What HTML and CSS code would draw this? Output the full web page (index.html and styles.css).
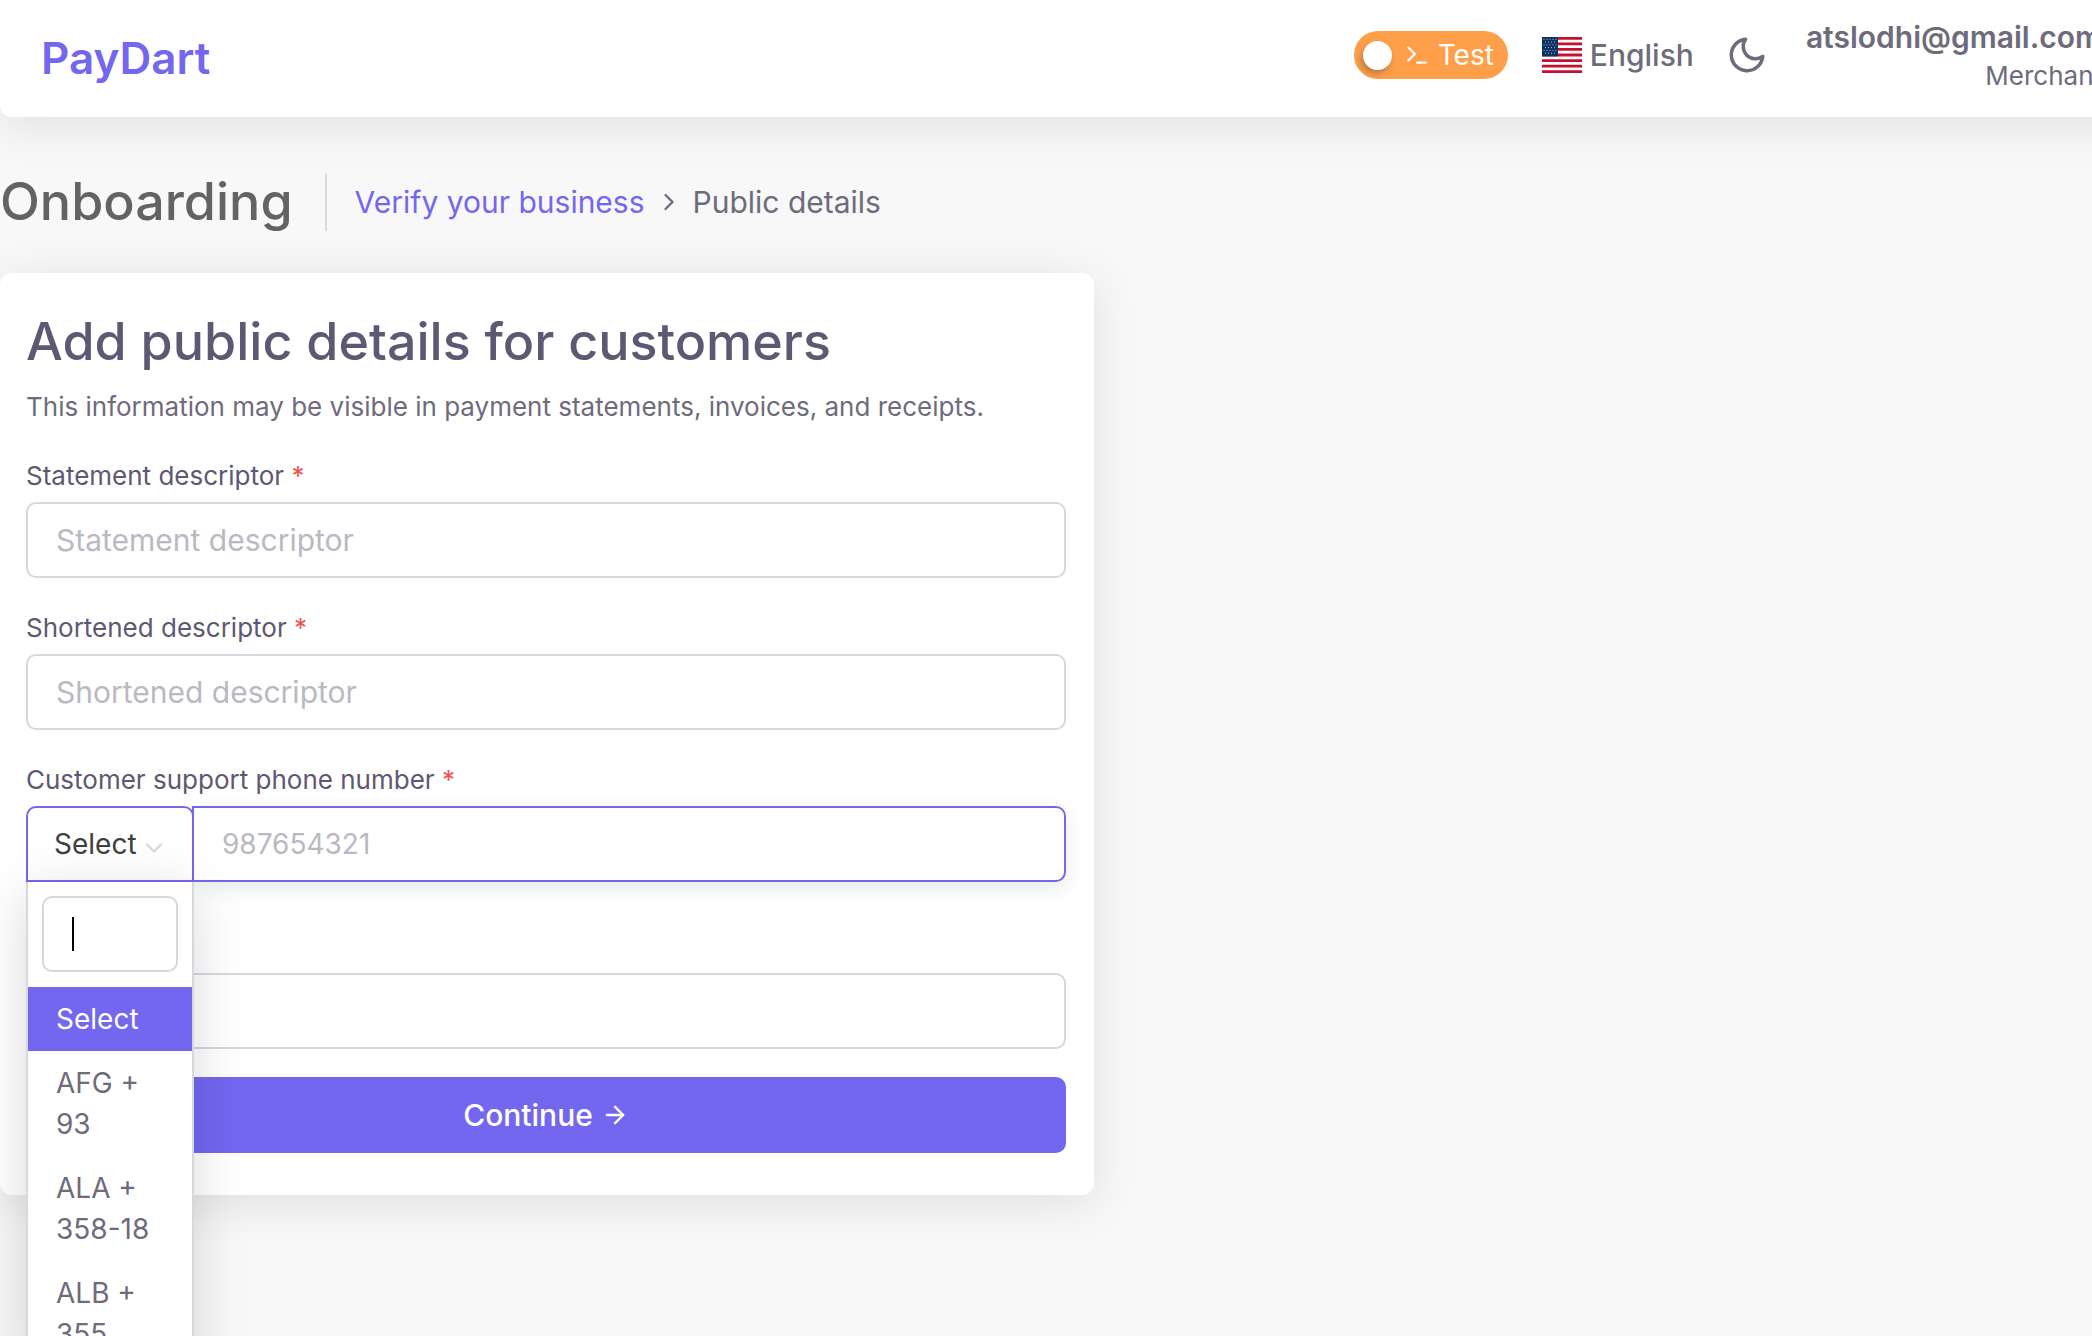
FILE: index.html
```html
<!DOCTYPE html>
<html lang="en">
<head>
    <meta charset="UTF-8">
    <meta name="viewport" content="width=device-width, initial-scale=1.0">
    <title>Onboarding - PayDart</title>
    <link rel="stylesheet" href="styles.css">
</head>
<body>
    <header class="navbar">
        <a href="#" class="brand">PayDart</a>

        <div class="navbar-right">
            <label class="mode-switch">
                <input type="checkbox" class="mode-knob">
                <svg class="mode-icon" viewBox="0 0 24 24" fill="none" stroke="currentColor" stroke-width="2" stroke-linecap="round" stroke-linejoin="round">
                    <polyline points="4 17 10 11 4 5"></polyline>
                    <line x1="12" y1="19" x2="20" y2="19"></line>
                </svg>
                <span>Test</span>
            </label>

            <button type="button" class="language">
                <svg class="flag" viewBox="0 0 40 39" preserveAspectRatio="none">
                    <rect width="40" height="39" fill="#fff"/>
                    <path d="M0 1.5H40M0 7.5H40M0 13.5H40M0 19.5H40M0 25.5H40M0 31.5H40M0 37.5H40" stroke="#c8102e" stroke-width="3"/>
                    <rect width="16" height="21" fill="#0a3161"/>
                    <path d="M1.5 2.5H16M3 5.5H15M1.5 8.5H16M3 11.5H15M1.5 14.5H16M3 17.5H15" stroke="#b9c6dc" stroke-width="1" stroke-dasharray="1 2"/>
                </svg>
                <span>English</span>
            </button>

            <button type="button" class="theme-toggle" aria-label="Dark mode">
                <svg viewBox="0 0 24 24" fill="none" stroke="currentColor" stroke-width="2" stroke-linecap="round" stroke-linejoin="round">
                    <path d="M21 12.79A9 9 0 1 1 11.21 3 7 7 0 0 0 21 12.79z"></path>
                </svg>
            </button>

            <a href="#" class="user">
                <span class="user-name">atslodhi@gmail.com</span>
                <span class="user-role">Merchant</span>
            </a>
        </div>
    </header>

    <main>
        <div class="content-header">
            <h1 class="content-title">Onboarding</h1>
            <nav class="breadcrumb" aria-label="Breadcrumb">
                <a href="#">Verify your business</a>
                <svg viewBox="0 0 24 24" fill="none" stroke="currentColor" stroke-width="2" stroke-linecap="round" stroke-linejoin="round">
                    <polyline points="9 18 15 12 9 6"></polyline>
                </svg>
                <span>Public details</span>
            </nav>
        </div>

        <form class="card">
            <h2 class="card-title">Add public details for customers</h2>
            <p class="card-text">This information may be visible in payment statements, invoices, and receipts.</p>

            <div class="form-group">
                <label for="statement">Statement descriptor <span class="required">*</span></label>
                <input type="text" id="statement" class="form-control" placeholder="Statement descriptor">
            </div>

            <div class="form-group">
                <label for="shortened">Shortened descriptor <span class="required">*</span></label>
                <input type="text" id="shortened" class="form-control" placeholder="Shortened descriptor">
            </div>

            <div class="form-group">
                <label for="phone">Customer support phone number <span class="required">*</span></label>
                <div class="phone-group">
                    <div class="country">
                        <select class="country-select" aria-label="Country code">
                            <option>Select</option>
                        </select>
                        <svg class="country-arrow" viewBox="0 0 24 24" fill="none" stroke="currentColor" stroke-width="2" stroke-linecap="round" stroke-linejoin="round">
                            <polyline points="6 9 12 15 18 9"></polyline>
                        </svg>

                        <!-- open country list -->
                        <div class="country-menu">
                            <div class="country-search">
                                <input type="text" class="form-control" aria-label="Search country">
                            </div>
                            <ul class="country-list">
                                <li class="active">Select</li>
                                <li>AFG + 93</li>
                                <li>ALA + 358-18</li>
                                <li>ALB + 355</li>
                            </ul>
                        </div>
                    </div>
                    <input type="tel" id="phone" class="form-control phone-input" placeholder="987654321">
                </div>
            </div>

            <div class="form-group form-group-last">
                <input type="text" class="form-control" aria-label="Website">
            </div>

            <button type="button" class="btn-primary">
                <span>Continue</span>
                <svg viewBox="0 0 24 24" fill="none" stroke="currentColor" stroke-width="2" stroke-linecap="round" stroke-linejoin="round">
                    <line x1="5" y1="12" x2="19" y2="12"></line>
                    <polyline points="12 5 19 12 12 19"></polyline>
                </svg>
            </button>
        </form>
    </main>
</body>
</html>
```
FILE: styles.css
```css
* {
    margin: 0;
    padding: 0;
    box-sizing: border-box;
}

body {
    font-family: Inter, 'Open Sans', sans-serif;
    font-size: 30px;
    line-height: 41px;
    color: #6e6b7b;
    background: #f8f8f8;
    height: 100vh;
    overflow: hidden;
}

a {
    color: #7367f0;
    text-decoration: none;
}

button,
input,
select {
    font: inherit;
    color: inherit;
}

button {
    background: none;
    border: none;
    cursor: pointer;
}

/* navbar */
.navbar {
    display: flex;
    justify-content: space-between;
    align-items: center;
    height: 117px;
    margin-right: -60px;
    padding: 0 50px 0 41px;
    background: #fff;
    border-radius: 0 0 12px 12px;
    box-shadow: 0 8px 48px rgba(0, 0, 0, 0.1);
}

.brand {
    font-size: 44px;
    font-weight: 600;
}

.navbar-right {
    display: flex;
    align-items: center;
    padding-bottom: 7px;
}

.mode-switch {
    display: flex;
    align-items: center;
    height: 48px;
    padding: 0 14px 0 9px;
    border-radius: 24px;
    background: #ff9f4a;
    color: #fff;
    font-size: 28px;
}

.mode-knob {
    appearance: none;
    width: 29px;
    height: 29px;
    border-radius: 50%;
    background: #fff;
    box-shadow: -2px 4px 6px rgba(34, 41, 47, 0.3);
}

.mode-icon {
    width: 26px;
    height: 26px;
    margin: 0 8px 0 12px;
}

.language {
    display: flex;
    align-items: center;
    gap: 8px;
    margin-left: 34px;
    font-weight: 500;
}

.flag {
    width: 40px;
    height: 36px;
}

.theme-toggle {
    display: flex;
    margin: 0 38px 0 32px;
}

.theme-toggle svg {
    width: 42px;
    height: 42px;
}

.user {
    display: flex;
    flex-direction: column;
    align-items: flex-end;
    color: #6e6b7b;
}

.user-name {
    font-weight: 600;
}

.user-role {
    font-size: 26px;
    line-height: 35px;
}

/* title row */
.content-header {
    display: flex;
    align-items: center;
    margin: 56px 0 42px;
}

.content-title {
    padding-right: 32px;
    border-right: 2px solid #d6dce1;
    font-size: 52px;
    font-weight: 500;
    line-height: 58px;
    color: #636363;
}

.breadcrumb {
    display: flex;
    align-items: center;
    gap: 10px;
    padding-left: 28px;
}

.breadcrumb svg {
    width: 28px;
    height: 28px;
}

/* card */
.card {
    max-width: 1094px;
    padding: 40px 28px 42px 26px;
    background: #fff;
    border-radius: 12px;
    box-shadow: 0 8px 48px rgba(0, 0, 0, 0.1);
}

.card-title {
    margin-bottom: 18px;
    font-size: 52px;
    font-weight: 500;
    line-height: 58px;
    color: #5e5873;
}

.card-text {
    margin-bottom: 34px;
    font-size: 26px;
    line-height: 35px;
}

.form-group {
    margin-bottom: 32px;
}

.form-group label {
    display: block;
    margin-bottom: 9px;
    font-size: 26px;
    line-height: 35px;
    color: #5e5873;
}

.required {
    color: #ea5455;
}

.form-control {
    display: block;
    width: 100%;
    height: 76px;
    padding: 0 28px;
    border: 2px solid #d8d6de;
    border-radius: 10px;
    background: #fff;
    outline: none;
}

.form-control::placeholder {
    color: #b9b9c3;
    opacity: 1;
}

.form-group-last {
    margin-top: 91px;
    margin-bottom: 28px;
}

/* phone number with country list */
.phone-group {
    display: flex;
}

.country {
    position: relative;
    z-index: 1;
    flex: 0 0 168px;
}

.country-select {
    display: block;
    appearance: none;
    width: 100%;
    height: 76px;
    padding-left: 26px;
    border: 2px solid #7367f0;
    border-radius: 10px 10px 0 0;
    background: #fff;
    color: #404040;
    font-size: 28px;
}

.country-arrow {
    position: absolute;
    top: 28px;
    right: 26px;
    width: 28px;
    height: 28px;
    color: #d8d6de;
}

.country-menu {
    position: absolute;
    top: 76px;
    left: 0;
    width: 100%;
    z-index: 10;
    background: #fff;
    border: 2px solid #d8d6de;
    border-top: none;
    box-shadow: 0 10px 50px rgba(0, 0, 0, 0.15);
    font-size: 28px;
}

.country-search {
    position: relative;
    padding: 14px 14px 15px;
}

/* text caret */
.country-search::after {
    content: "";
    position: absolute;
    top: 35px;
    left: 44px;
    width: 2px;
    height: 34px;
    background: #000;
}

.country-list {
    list-style: none;
}

.country-list li {
    padding: 12px 28px 11px;
}

.country-list .active {
    background: #7367f0;
    color: #fff;
}

.phone-input {
    flex: 1;
    margin-left: -2px;
    border-color: #7367f0;
    border-radius: 0 10px 10px 0;
    box-shadow: 0 6px 20px rgba(34, 41, 47, 0.1);
    font-size: 28px;
}

.btn-primary {
    display: flex;
    align-items: center;
    justify-content: center;
    gap: 8px;
    width: 100%;
    height: 76px;
    border-radius: 10px;
    background: #7367f0;
    color: #fff;
    font-weight: 500;
}

.btn-primary svg {
    width: 28px;
    height: 28px;
}
```
